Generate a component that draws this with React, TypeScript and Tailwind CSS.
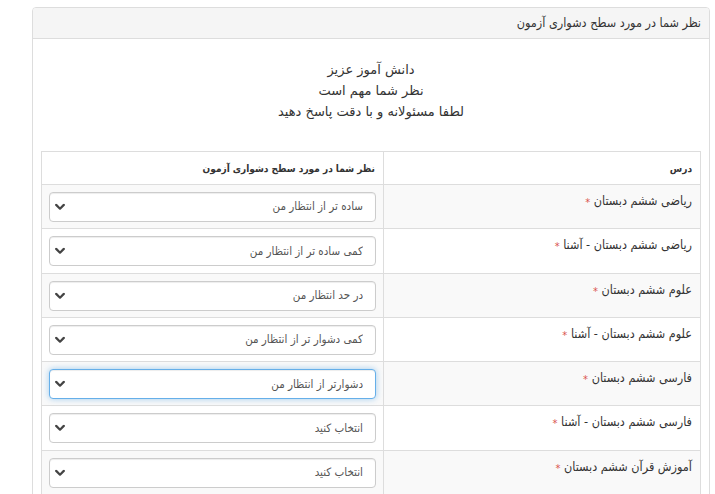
import React from 'react';

const rows = [
  { subject: 'ریاضی ششم دبستان', value: 'ساده تر از انتظار من' },
  { subject: 'ریاضی ششم دبستان - آشنا', value: 'کمی ساده تر از انتظار من' },
  { subject: 'علوم ششم دبستان', value: 'در حد انتظار من' },
  { subject: 'علوم ششم دبستان - آشنا', value: 'کمی دشوار تر از انتظار من' },
  { subject: 'فارسی ششم دبستان', value: 'دشوارتر از انتظار من', focused: true },
  { subject: 'فارسی ششم دبستان - آشنا', value: 'انتخاب کنید' },
  { subject: 'آموزش قرآن ششم دبستان', value: 'انتخاب کنید' },
];

const options = [
  'انتخاب کنید',
  'ساده تر از انتظار من',
  'کمی ساده تر از انتظار من',
  'در حد انتظار من',
  'کمی دشوار تر از انتظار من',
  'دشوارتر از انتظار من',
];

const condensed = { fontFamily: '"DejaVu Sans Condensed", "DejaVu Sans", sans-serif' };

function Chevron() {
  return (
    <svg width="10" height="7" viewBox="0 0 10 7" className="absolute left-[6px] top-1/2 -translate-y-1/2 pointer-events-none">
      <path d="M1.2 1.4 L5 5.2 L8.8 1.4" fill="none" stroke="#444" strokeWidth="2.2" strokeLinecap="round" strokeLinejoin="round" />
    </svg>
  );
}

export default function App() {
  return (
    <div dir="rtl" className="min-h-screen bg-white pl-[32px] pr-[5px] pt-[7px] text-[#333]" style={{ fontFamily: '"DejaVu Sans", "Noto Sans", sans-serif' }}>
      <div className="border border-[#ddd] rounded-t-[4px] overflow-hidden">
        {/* Heading */}
        <div className="h-[31px] bg-[#f5f5f5] border-b border-[#ddd] flex items-center px-[8px] text-[12.5px]" style={condensed}>
          نظر شما در مورد سطح دشواری آزمون
        </div>

        {/* Body */}
        <div className="pt-[20px] px-[8px]">
          <div className="text-center text-[13px] leading-[21px]">
            <p>دانش آموز عزیز</p>
            <p>نظر شما مهم است</p>
            <p>لطفا مسئولانه و با دقت پاسخ دهید</p>
          </div>

          <table className="mt-[29px] w-full table-fixed border-collapse border border-[#ddd] text-[12px]" style={condensed}>
            <colgroup>
              <col className="w-[317px]" />
              <col />
            </colgroup>
            <thead>
              <tr className="h-[33px]">
                <th className="border border-[#ddd] text-right px-[8px] font-bold text-[10px]">درس</th>
                <th className="border border-[#ddd] text-right px-[8px] font-bold text-[10px]">نظر شما در مورد سطح دشواری آزمون</th>
              </tr>
            </thead>
            <tbody>
              {rows.map((r, i) => (
                <tr key={i} className={i % 2 === 0 ? 'bg-[#f9f9f9]' : 'bg-white'}>
                  <td className="border border-[#ddd] align-top px-[8px] pt-[7px] text-[12.5px] leading-[18px]">
                    {r.subject} <span className="text-[#d9534f] text-[11px] relative top-[1px]">*</span>
                  </td>
                  <td className="border border-[#ddd] px-[7px] pt-[7px] pb-[6.3px]">
                    <div className="relative">
                      <select
                        defaultValue={r.value}
                        className={
                          'appearance-none w-full h-[30px] bg-white rounded-[4px] pr-[12px] pl-[24px] text-[11.5px] text-[#555] outline-none ' +
                          (r.focused
                            ? 'border border-[#66afe9] shadow-[inset_0_1px_1px_rgba(0,0,0,0.075),0_0_6px_rgba(102,175,233,0.6)]'
                            : 'border border-[#ccc] shadow-[inset_0_1px_1px_rgba(0,0,0,0.075)]')
                        }
                        style={condensed}
                      >
                        {options.map((o) => (
                          <option key={o} value={o}>{o}</option>
                        ))}
                      </select>
                      <Chevron />
                    </div>
                  </td>
                </tr>
              ))}
            </tbody>
          </table>
        </div>
      </div>
    </div>
  );
}
